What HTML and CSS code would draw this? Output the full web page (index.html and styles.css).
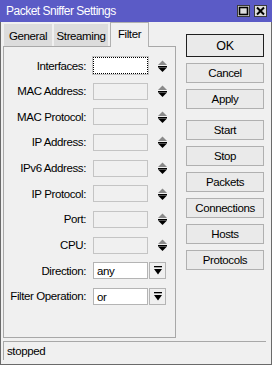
FILE: index.html
```html
<!DOCTYPE html>
<html>
<head>
<meta charset="utf-8">
<link rel="stylesheet" href="styles.css">
</head>
<body>
<div class="window">
  <div class="titlebar">
    <span class="title">Packet Sniffer Settings</span>
    <div class="tb-buttons">
      <span class="tb-btn"><svg width="11" height="10" viewBox="0 0 11 10"><rect x="1.5" y="1.5" width="8" height="7" fill="none" stroke="#000" stroke-width="1.6"/></svg></span>
      <span class="tb-btn"><svg width="11" height="10" viewBox="0 0 11 10"><path d="M2 1.5 L9 8.5 M9 1.5 L2 8.5" stroke="#000" stroke-width="2"/></svg></span>
    </div>
  </div>
  <div class="main">
    <div class="left">
      <div class="tabs">
        <span class="tab">General</span>
        <span class="tab">Streaming</span>
        <span class="tab active">Filter</span>
      </div>
      <div class="panel">
        <div class="form">
          <label>Interfaces:</label><span class="input focus"></span><span class="spin"><svg width="9" height="12" viewBox="0 0 9 12"><path d="M0 5 L4.5 0.5 L9 5Z" fill="#8a8a8a"/><rect x="0" y="6" width="9" height="1.3" fill="#000"/><path d="M0 7.5 L9 7.5 L4.5 12Z" fill="#000"/></svg></span>
          <label>MAC Address:</label><span class="input"></span><span class="spin"><svg width="9" height="12" viewBox="0 0 9 12"><path d="M0 5 L4.5 0.5 L9 5Z" fill="#8a8a8a"/><rect x="0" y="6" width="9" height="1.3" fill="#000"/><path d="M0 7.5 L9 7.5 L4.5 12Z" fill="#000"/></svg></span>
          <label>MAC Protocol:</label><span class="input"></span><span class="spin"><svg width="9" height="12" viewBox="0 0 9 12"><path d="M0 5 L4.5 0.5 L9 5Z" fill="#8a8a8a"/><rect x="0" y="6" width="9" height="1.3" fill="#000"/><path d="M0 7.5 L9 7.5 L4.5 12Z" fill="#000"/></svg></span>
          <label>IP Address:</label><span class="input"></span><span class="spin"><svg width="9" height="12" viewBox="0 0 9 12"><path d="M0 5 L4.5 0.5 L9 5Z" fill="#8a8a8a"/><rect x="0" y="6" width="9" height="1.3" fill="#000"/><path d="M0 7.5 L9 7.5 L4.5 12Z" fill="#000"/></svg></span>
          <label>IPv6 Address:</label><span class="input"></span><span class="spin"><svg width="9" height="12" viewBox="0 0 9 12"><path d="M0 5 L4.5 0.5 L9 5Z" fill="#8a8a8a"/><rect x="0" y="6" width="9" height="1.3" fill="#000"/><path d="M0 7.5 L9 7.5 L4.5 12Z" fill="#000"/></svg></span>
          <label>IP Protocol:</label><span class="input"></span><span class="spin"><svg width="9" height="12" viewBox="0 0 9 12"><path d="M0 5 L4.5 0.5 L9 5Z" fill="#8a8a8a"/><rect x="0" y="6" width="9" height="1.3" fill="#000"/><path d="M0 7.5 L9 7.5 L4.5 12Z" fill="#000"/></svg></span>
          <label>Port:</label><span class="input"></span><span class="spin"><svg width="9" height="12" viewBox="0 0 9 12"><path d="M0 5 L4.5 0.5 L9 5Z" fill="#8a8a8a"/><rect x="0" y="6" width="9" height="1.3" fill="#000"/><path d="M0 7.5 L9 7.5 L4.5 12Z" fill="#000"/></svg></span>
          <label>CPU:</label><span class="input"></span><span class="spin"><svg width="9" height="12" viewBox="0 0 9 12"><path d="M0 5 L4.5 0.5 L9 5Z" fill="#8a8a8a"/><rect x="0" y="6" width="9" height="1.3" fill="#000"/><path d="M0 7.5 L9 7.5 L4.5 12Z" fill="#000"/></svg></span>
          <label>Direction:</label><span class="input white">any</span><span class="drop"><svg width="8" height="9" viewBox="0 0 8 9"><rect x="0" y="0" width="8" height="1.3" fill="#000"/><path d="M0 3 L8 3 L4 8.5Z" fill="#000"/></svg></span>
          <label>Filter Operation:</label><span class="input white">or</span><span class="drop"><svg width="8" height="9" viewBox="0 0 8 9"><rect x="0" y="0" width="8" height="1.3" fill="#000"/><path d="M0 3 L8 3 L4 8.5Z" fill="#000"/></svg></span>
        </div>
      </div>
    </div>
    <div class="buttons">
      <span class="btn default">OK</span>
      <span class="btn">Cancel</span>
      <span class="btn">Apply</span>
      <span class="btn sep">Start</span>
      <span class="btn">Stop</span>
      <span class="btn">Packets</span>
      <span class="btn">Connections</span>
      <span class="btn">Hosts</span>
      <span class="btn">Protocols</span>
    </div>
  </div>
  <div class="status">stopped</div>
</div>
</body>
</html>
```

FILE: styles.css
```css
* { box-sizing: border-box; }
html, body { margin: 0; padding: 0; background: #f0f0f0; }
body {
  font-family: "Liberation Sans", Arial, sans-serif;
  font-size: 11.5px;
  letter-spacing: -0.4px;
  color: #000;
  white-space: nowrap;
}
.window {
  width: 272px;
  height: 365px;
  border: 1px solid #6a6a6a;
  border-top: none;
  display: flex;
  flex-direction: column;
  background: #f0f0f0;
}
.titlebar {
  height: 22px;
  margin: 0 -1px;
  background: #5b5bc6;
  color: #fff;
  display: flex;
  align-items: center;
  justify-content: space-between;
  padding: 0 5px 0 6px;
}
.title { font-size: 12px; letter-spacing: -0.5px; }
.tb-buttons { display: flex; gap: 4px; }
.tb-btn {
  width: 13px;
  height: 12px;
  background: #dcdcdc;
  border: 1px solid #3a3a3a;
  display: flex;
  align-items: center;
  justify-content: center;
}
.main {
  flex: 1;
  display: flex;
  padding: 2px 0 0 2px;
}
.left { width: 173px; display: flex; flex-direction: column; }
.tabs {
  display: flex;
  height: 22px;
  padding-left: 1px;
  align-items: flex-end;
  position: relative;
  z-index: 1;
}
.tab {
  height: 22px;
  width: 48px;
  margin-right: 2px;
  background: #dcdcdc;
  display: flex;
  align-items: center;
  justify-content: center;
  padding-top: 2px;
}
.tab:nth-child(2) { width: 54px; }
.tab.active {
  width: 39px;
  height: 25px;
  margin-top: -3px;
  margin-bottom: -1px;
  background: #f0f0f0;
  border: 1px solid #b0b0b0;
  border-bottom: none;
  padding: 0 0 2px;
}
.panel {
  height: 292px;
  border: 1px solid #a8a8a8;
  background: #f0f0f0;
  padding: 10px 0 0 0;
}
.form {
  display: grid;
  grid-template-columns: 83px 56px 17px;
  column-gap: 5px;
  row-gap: 8.67px;
  grid-auto-rows: 17px;
  align-items: center;
}
.form label { text-align: right; padding-right: 1px; }
.input {
  height: 17px;
  border: 1px solid #c4c4c4;
  background: #f0f0f0;
  padding: 1px 3px;
  line-height: 14px;
  margin-left: 1px;
}
.input.white { background: #fff; border-color: #b4b4b4; }
.input.focus { background: #fff; border: 1px dotted #000; outline: 1px solid #c4c4c4; outline-offset: 0; }
.spin { display: flex; align-items: center; padding-left: 5px; height: 17px; }
.drop {
  width: 17px;
  height: 17px;
  margin-left: -4px;
  border: 1px solid #b4b4b4;
  background: #f0f0f0;
  display: flex;
  align-items: center;
  justify-content: center;
}
.buttons {
  display: flex;
  flex-direction: column;
  gap: 6px;
  margin-left: 10px;
  padding-top: 10px;
  width: 78px;
}
.btn {
  height: 20px;
  border: 1px solid #b0b0b0;
  background: #eaeaea;
  display: flex;
  align-items: center;
  justify-content: center;
}
.btn.default { height: 23px; border: 1px solid #202020; font-size: 12.5px; }
.btn.sep { margin-top: 5px; }
.status {
  height: 19px;
  margin: 0 5px 4px 2px;
  border-top: 1px solid #a8a8a8;
  border-left: 1px solid #a8a8a8;
  padding: 2px 3px;
  line-height: 14px;
}
```
